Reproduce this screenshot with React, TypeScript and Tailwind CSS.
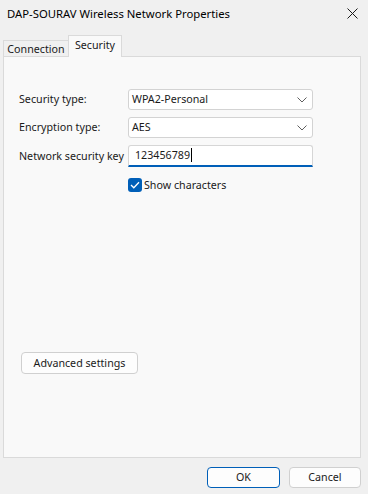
import React from 'react';

function Chevron() {
  return (
    <svg width="10" height="6" viewBox="0 0 10 6" className="text-[#5f5f5f]">
      <path d="M0.5 0.5 L5 5 L9.5 0.5" fill="none" stroke="currentColor" strokeWidth="1" />
    </svg>
  );
}

function Select({ value }: { value: string }) {
  return (
    <div className="h-[21px] w-[185px] bg-white border border-[#d3d3d3] rounded-[3px] flex items-center justify-between pl-[3px] pr-[5px]">
      <span>{value}</span>
      <Chevron />
    </div>
  );
}

export default function App() {
  return (
    <div className="w-[368px] h-[494px] bg-[#f0f0f0] flex flex-col font-['Noto_Sans',sans-serif] text-[10.7px] leading-none text-[#1a1a1a] whitespace-nowrap overflow-hidden">
      {/* title bar */}
      <div className="h-[28px] flex items-center justify-between pl-[7px] pr-[10px] pb-[1px]">
        <span className="text-black text-[11.3px]">DAP-SOURAV Wireless Network Properties</span>
        <svg width="11" height="11" viewBox="0 0 11 11">
          <path d="M0.5 0.5 L10.5 10.5 M10.5 0.5 L0.5 10.5" stroke="#1a1a1a" strokeWidth="1" />
        </svg>
      </div>

      {/* tabs */}
      <div className="h-[28px] flex items-end pl-[3px]">
        <div className="h-[16px] w-[66px] border border-b-0 border-[#dadada] bg-[#f0f0f0] flex items-center justify-center pt-[2px]">
          Connection
        </div>
        <div className="relative z-10 -mb-px h-[22px] w-[54px] -ml-px border border-b-0 border-[#dadada] bg-[#f9f9f9] flex items-start justify-center pt-[4px]">
          Security
        </div>
      </div>

      {/* panel */}
      <div className="ml-[3px] w-[358px] h-[402px] border border-[#dadada] bg-[#f9f9f9] flex flex-col pl-[15px] pt-[32px]">
        <div className="grid grid-cols-[109px_185px] items-center gap-y-[7px]">
          <span>Security type:</span>
          <Select value="WPA2-Personal" />
          <span>Encryption type:</span>
          <Select value="AES" />
          <span>Network security key</span>
          <div className="h-[22px] w-[185px] bg-white border border-[#d6d6d6] border-b-2 border-b-[#005fb8] rounded-t-[3px] flex items-center pl-[6px] pb-[1px]">
            <span>123456789</span>
            <span className="ml-[1px] w-px h-[14px] bg-black" />
          </div>
        </div>

        <div className="flex items-center mt-[11px] ml-[109px]">
          <div className="w-[14px] h-[14px] rounded-[3px] bg-[#005fb8] flex items-center justify-center">
            <svg width="10" height="8" viewBox="0 0 10 8">
              <path d="M1 4 L3.8 6.8 L9 1.2" fill="none" stroke="white" strokeWidth="1.3" />
            </svg>
          </div>
          <span className="ml-[2px]">Show characters</span>
        </div>

        <div className="mt-[160px] ml-[2px] w-[117px] h-[22px] bg-[#fdfdfd] border border-[#d0d0d0] rounded-[4px] flex items-center justify-center">
          Advanced settings
        </div>
      </div>

      {/* footer */}
      <div className="flex justify-end gap-[9px] pr-[7px] pt-[9px]">
        <div className="w-[73px] h-[21px] bg-[#fdfdfd] border border-[#005fb8] rounded-[4px] flex items-center justify-center">
          OK
        </div>
        <div className="w-[72px] h-[21px] bg-[#fdfdfd] border border-[#d0d0d0] rounded-[4px] flex items-center justify-center">
          Cancel
        </div>
      </div>
    </div>
  );
}
